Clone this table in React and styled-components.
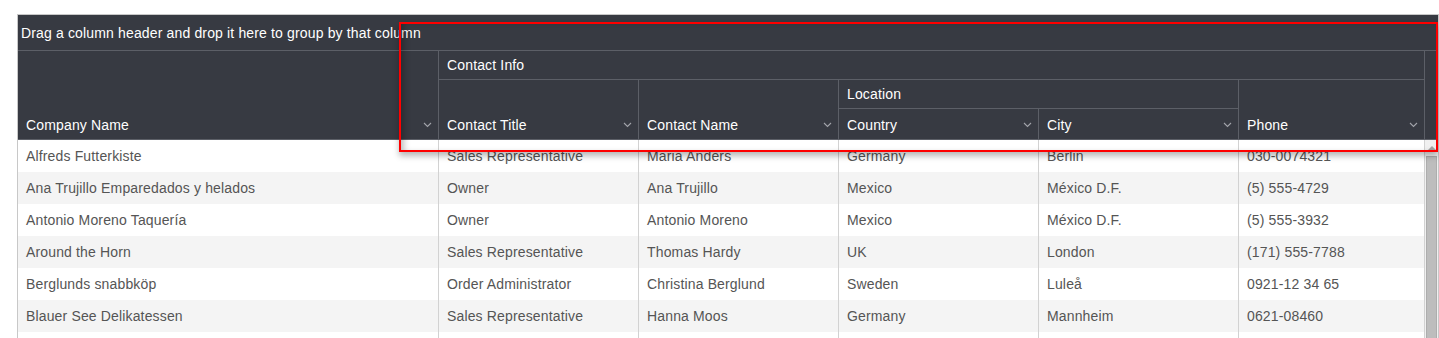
import styled, { createGlobalStyle } from "styled-components";

const columns = "421px 200px 200px 200px 200px 186px";

const customers = [
  ["Alfreds Futterkiste", "Sales Representative", "Maria Anders", "Germany", "Berlin", "030-0074321"],
  ["Ana Trujillo Emparedados y helados", "Owner", "Ana Trujillo", "Mexico", "México D.F.", "(5) 555-4729"],
  ["Antonio Moreno Taquería", "Owner", "Antonio Moreno", "Mexico", "México D.F.", "(5) 555-3932"],
  ["Around the Horn", "Sales Representative", "Thomas Hardy", "UK", "London", "(171) 555-7788"],
  ["Berglunds snabbköp", "Order Administrator", "Christina Berglund", "Sweden", "Luleå", "0921-12 34 65"],
  ["Blauer See Delikatessen", "Sales Representative", "Hanna Moos", "Germany", "Mannheim", "0621-08460"],
  ["", "", "", "", "", ""],
];

const headers = [
  { title: "Company Name", col: "1", row: "1 / 4", sortable: true },
  { title: "Contact Info", col: "2 / 7", row: "1" },
  { title: "Contact Title", col: "2", row: "2 / 4", sortable: true },
  { title: "Contact Name", col: "3", row: "2 / 4", sortable: true },
  { title: "Location", col: "4 / 6", row: "2" },
  { title: "Country", col: "4", row: "3", sortable: true },
  { title: "City", col: "5", row: "3", sortable: true },
  { title: "Phone", col: "6", row: "2 / 4", sortable: true },
];

const GlobalStyle = createGlobalStyle`
  html, body {
    margin: 0;
    overflow: hidden;
    background: #fff;
  }

  body {
    font-family: "Liberation Sans", Arial, sans-serif;
    letter-spacing: 0.15px;
  }
`;

const Chevron = () => (
  <svg width="9" height="6" viewBox="0 0 9 6">
    <path d="M1 1l3.5 3.5L8 1" fill="none" stroke="#a2a4aa" strokeWidth="1.1" />
  </svg>
);

const App = () => (
  <Page>
    <GlobalStyle />
    <Grid>
      <GroupPanel>Drag a column header and drop it here to group by that column</GroupPanel>
      <Header>
        {headers.map((h) => (
          <HeaderCell key={h.title} $col={h.col} $row={h.row}>
            <span>{h.title}</span>
            {h.sortable && <Chevron />}
          </HeaderCell>
        ))}
        <HeaderSpacer />
      </Header>
      <Body>
        <Rows>
          {customers.map((c, i) => (
            <Row key={i} $alt={i % 2 === 1}>
              {c.map((v, j) => (
                <Cell key={j}>{v}</Cell>
              ))}
            </Row>
          ))}
        </Rows>
        <Scrollbar>
          <ScrollArrow />
          <ScrollThumb />
        </Scrollbar>
      </Body>
    </Grid>
    <Highlight />
  </Page>
);

export default App;

const Page = styled.div`
  position: relative;
  height: 338px;
  box-sizing: border-box;
  padding: 14px 0 0 17px;
  overflow: hidden;
`;

const Grid = styled.div`
  width: 1422px;
  box-sizing: border-box;
  border: 1px solid #c8c8c8;
  border-bottom: none;
`;

const GroupPanel = styled.div`
  height: 35px;
  display: flex;
  align-items: center;
  padding-left: 3px;
  background: #373a42;
  border-bottom: 1px solid #5c5f67;
  color: #fff;
  font-size: 14px;
`;

const Header = styled.div`
  display: grid;
  grid-template-columns: ${columns} 13px;
  grid-template-rows: 29px 29px 31px;
  background: #373a42;
`;

const HeaderCell = styled.div`
  grid-column: ${(p) => p.$col};
  grid-row: ${(p) => p.$row};
  display: flex;
  align-items: flex-end;
  justify-content: space-between;
  box-sizing: border-box;
  padding: 0 6px 6px 8px;
  border-right: 1px solid #5c5f67;
  border-bottom: 1px solid #5c5f67;
  color: #fff;
  font-size: 14px;
  line-height: 16px;

  svg {
    margin-bottom: 5px;
  }
`;

const HeaderSpacer = styled.div`
  grid-column: 7;
  grid-row: 1 / 4;
  border-bottom: 1px solid #5c5f67;
`;

const Body = styled.div`
  display: flex;
  height: 240px;
`;

const Rows = styled.div`
  width: 1407px;
`;

const Row = styled.div`
  display: grid;
  grid-template-columns: ${columns};
  height: 32px;
  background: ${(p) => (p.$alt ? "#f4f4f4" : "#fff")};
`;

const Cell = styled.div`
  display: flex;
  align-items: center;
  box-sizing: border-box;
  padding-left: 8px;
  border-right: 1px solid #d2d2d2;
  color: #555;
  font-size: 14px;
  white-space: nowrap;
  overflow: hidden;
`;

const Scrollbar = styled.div`
  width: 13px;
  display: flex;
  flex-direction: column;
  align-items: center;
  background: #f0f0f0;
`;

const ScrollArrow = styled.div`
  margin-top: 6px;
  width: 0;
  height: 0;
  border-left: 4px solid transparent;
  border-right: 4px solid transparent;
  border-bottom: 4px solid #a3a3a3;
`;

const ScrollThumb = styled.div`
  margin-top: 6px;
  width: 11px;
  flex: 1;
  box-sizing: border-box;
  background: #bdbdbd;
  border: 1px solid #adadad;
`;

const Highlight = styled.div`
  position: absolute;
  top: 22px;
  left: 399px;
  width: 1039px;
  height: 130px;
  box-sizing: border-box;
  border: 2px solid #f00;
  box-shadow: 0 4px 6px rgba(0, 0, 0, 0.28), inset 6px 0 6px -3px rgba(0, 0, 0, 0.25);
  pointer-events: none;
`;
